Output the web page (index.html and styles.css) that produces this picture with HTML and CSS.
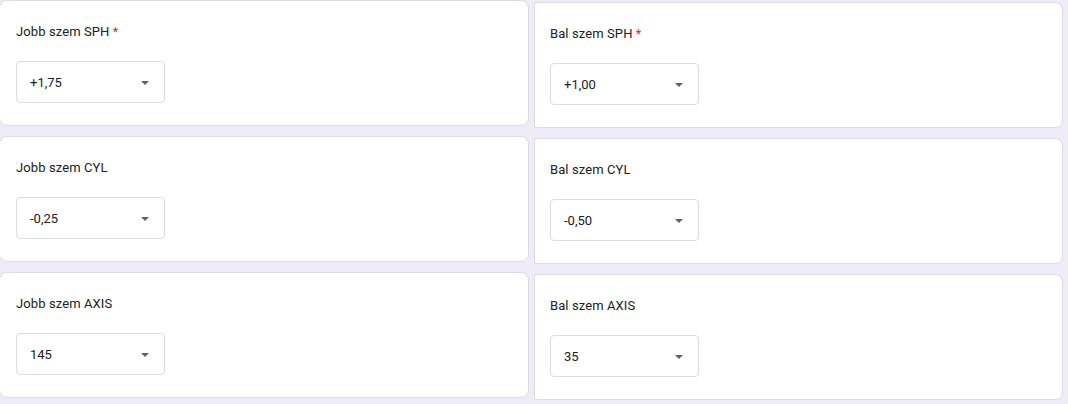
FILE: index.html
```html
<!DOCTYPE html>
<html lang="hu">
<head>
<meta charset="utf-8">
<title>Szemüveg adatok</title>
<link rel="stylesheet" href="styles.css">
</head>
<body>
<div class="page">
  <div class="col col-left">
    <div class="card">
      <div class="label">Jobb szem SPH <span class="req">*</span></div>
      <div class="select"><span class="value">+1,75</span><span class="arrow"></span></div>
    </div>
    <div class="card">
      <div class="label">Jobb szem CYL</div>
      <div class="select"><span class="value">-0,25</span><span class="arrow"></span></div>
    </div>
    <div class="card">
      <div class="label">Jobb szem AXIS</div>
      <div class="select"><span class="value">145</span><span class="arrow"></span></div>
    </div>
  </div>
  <div class="col col-right">
    <div class="card">
      <div class="label">Bal szem SPH <span class="req">*</span></div>
      <div class="select"><span class="value">+1,00</span><span class="arrow"></span></div>
    </div>
    <div class="card">
      <div class="label">Bal szem CYL</div>
      <div class="select"><span class="value">-0,50</span><span class="arrow"></span></div>
    </div>
    <div class="card">
      <div class="label">Bal szem AXIS</div>
      <div class="select"><span class="value">35</span><span class="arrow"></span></div>
    </div>
  </div>
</div>
</body>
</html>
```
FILE: styles.css
```css
html, body {
  margin: 0;
  padding: 0;
  background: #f0ebf8;
  font-family: Roboto, "Liberation Sans", Arial, sans-serif;
  color: #202124;
  overflow: hidden;
}
.page {
  display: grid;
  grid-template-columns: 530px 529px;
  column-gap: 5px;
  margin-left: -1px;
  align-items: start;
}
.col {
  display: flex;
  flex-direction: column;
  gap: 10px;
}
.col-right {
  margin-top: 2px;
}
.card {
  box-sizing: border-box;
  height: 126px;
  background: #fff;
  border: 1px solid #dadce0;
  border-radius: 8px;
  padding: 21px 16px 0 16px;
}
.col-right .card {
  border-radius: 2px 8px 8px 2px;
  padding-left: 15px;
}
.label {
  font-size: 13px;
  line-height: 19px;
  letter-spacing: 0.1px;
  color: #202124;
}
.req {
  color: #d93025;
}
.select {
  box-sizing: border-box;
  margin-top: 20px;
  width: 149px;
  height: 42px;
  border: 1px solid #dadce0;
  border-radius: 4px;
  display: flex;
  align-items: center;
  justify-content: space-between;
  padding: 0 15px 0 13px;
}
.value {
  font-size: 13px;
  color: #202124;
}
.arrow {
  width: 0;
  height: 0;
  border-left: 4px solid transparent;
  border-right: 4px solid transparent;
  border-top: 4px solid #5f6368;
  margin-top: 1px;
}
```
